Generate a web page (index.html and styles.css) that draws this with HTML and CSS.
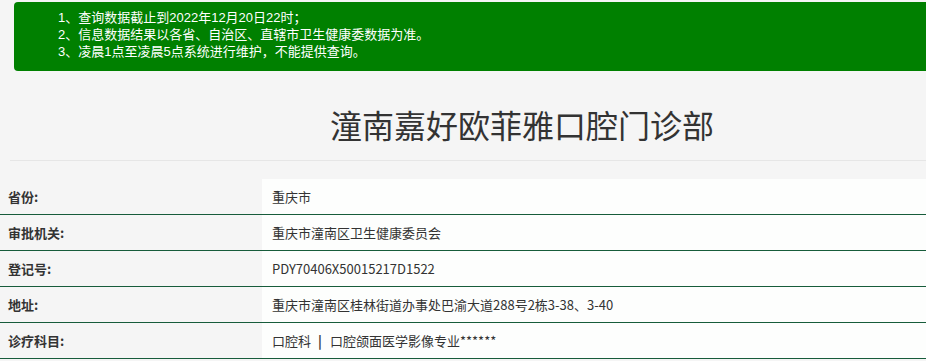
FILE: index.html
```html
<!DOCTYPE html>
<html lang="zh-CN">
<head>
<meta charset="utf-8">
<title>潼南嘉好欧菲雅口腔门诊部</title>
<link rel="stylesheet" href="styles.css">
</head>
<body>
<div class="notice">
  <p>1、查询数据截止到2022年12月20日22时；</p>
  <p>2、信息数据结果以各省、自治区、直辖市卫生健康委数据为准。</p>
  <p>3、凌晨1点至凌晨5点系统进行维护，不能提供查询。</p>
</div>
<div class="title-wrap">
  <h1 class="title">潼南嘉好欧菲雅口腔门诊部</h1>
</div>
<div class="info">
  <div class="row"><div class="label">省份:</div><div class="value">重庆市</div></div>
  <div class="row"><div class="label">审批机关:</div><div class="value">重庆市潼南区卫生健康委员会</div></div>
  <div class="row"><div class="label">登记号:</div><div class="value">PDY70406X50015217D1522</div></div>
  <div class="row"><div class="label">地址:</div><div class="value">重庆市潼南区桂林街道办事处巴渝大道288号2栋3-38、3-40</div></div>
  <div class="row"><div class="label">诊疗科目:</div><div class="value">口腔科<span class="sep">|</span>口腔颌面医学影像专业******</div></div>
</div>
</body>
</html>
```
FILE: styles.css
```css
html, body {
  margin: 0;
  padding: 0;
  background: #f5f5f5;
  font-family: "Noto Sans CJK SC", "Microsoft YaHei", sans-serif;
  color: #333;
  overflow: hidden;
}
.notice {
  margin: 2px 0 0 14px;
  height: 69px;
  box-sizing: border-box;
  background: #008000;
  border-radius: 4px 0 0 4px;
  padding: 7px 0 0 44px;
  color: #fff;
  font-family: "Liberation Sans", "Noto Sans CJK SC", sans-serif;
  font-size: 13px;
  line-height: 17px;
}
.notice p {
  margin: 0;
  height: 17px;
}
.title-wrap {
  margin: 0 0 18px 10px;
  border-bottom: 1px solid #e6e6e6;
  padding: 29px 0 12px 108px;
  display: flex;
  justify-content: center;
}
.title {
  margin: 0;
  font-size: 32px;
  font-weight: normal;
  line-height: 48px;
  color: #333;
}
.info {
  font-size: 13px;
}
.row {
  display: flex;
  height: 36px;
  box-sizing: border-box;
  border-bottom: 1px solid #175c3b;
}
.label {
  width: 262px;
  flex: none;
  padding-left: 8px;
  box-sizing: border-box;
  font-weight: bold;
  display: flex;
  align-items: center;
  color: #333;
}
.value {
  flex: 1;
  background: #fdfefd;
  padding-left: 10px;
  display: flex;
  align-items: center;
  color: #333;
}
.sep {
  margin: 0 8px 0 7px;
  font-weight: bold;
}
```
